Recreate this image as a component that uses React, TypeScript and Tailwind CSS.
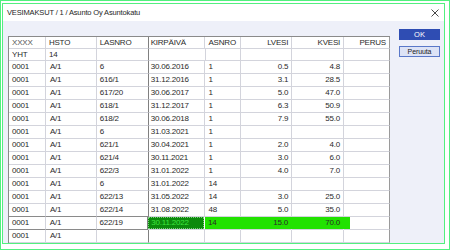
import React from "react";

type Row = {
  a: string;
  b: string;
  c: string;
  d: string;
  e: string;
  f: string;
  g: string;
  current?: boolean;
};

const ROWS: Row[] = [
  { a: "0001", b: "A/1", c: "6", d: "30.06.2016", e: "1", f: "0.5", g: "4.8" },
  { a: "0001", b: "A/1", c: "616/1", d: "31.12.2016", e: "1", f: "3.1", g: "28.5" },
  { a: "0001", b: "A/1", c: "617/20", d: "30.06.2017", e: "1", f: "5.0", g: "47.0" },
  { a: "0001", b: "A/1", c: "618/1", d: "31.12.2017", e: "1", f: "6.3", g: "50.9" },
  { a: "0001", b: "A/1", c: "618/2", d: "30.06.2018", e: "1", f: "7.9", g: "55.0" },
  { a: "0001", b: "A/1", c: "6", d: "31.03.2021", e: "1", f: "", g: "" },
  { a: "0001", b: "A/1", c: "621/1", d: "30.04.2021", e: "1", f: "2.0", g: "4.0" },
  { a: "0001", b: "A/1", c: "621/4", d: "30.11.2021", e: "1", f: "3.0", g: "6.0" },
  { a: "0001", b: "A/1", c: "622/3", d: "31.01.2022", e: "1", f: "4.0", g: "7.0" },
  { a: "0001", b: "A/1", c: "6", d: "31.01.2022", e: "14", f: "", g: "" },
  { a: "0001", b: "A/1", c: "622/13", d: "31.05.2022", e: "14", f: "3.0", g: "25.0" },
  { a: "0001", b: "A/1", c: "622/14", d: "31.08.2022", e: "48", f: "5.0", g: "35.0" },
  { a: "0001", b: "A/1", c: "622/19", d: "30.11.2022", e: "14", f: "15.0", g: "70.0", current: true },
  { a: "0001", b: "A/1", c: "", d: "", e: "", f: "", g: "" },
];

const cell = "h-full flex items-center border-r border-b border-[#d3d4dc] whitespace-nowrap";

const App = () => {
  return (
    <div className="w-[450px] h-[250px] bg-white border border-[#52f07f] pl-[1px] pt-[2px] pr-[4px] pb-[5px] text-[#2a2a2a] font-['Liberation_Sans',Arial,sans-serif]">
      <div className="w-full h-full border border-[#52f07f] flex flex-col">
        {/* Otsikkopalkki */}
        <div className="h-[17px] bg-white flex items-center justify-between pl-[4px] pr-[4px]">
          <span className="text-[7.5px] tracking-[-0.15px] text-[#1e1e1e]">VESIMAKSUT / 1 / Asunto Oy Asuntokatu</span>
          <svg width="8" height="8" viewBox="0 0 8 8" className="mr-[1px]">
            <path d="M0.5 0.5 L7.5 7.5 M7.5 0.5 L0.5 7.5" stroke="#333" strokeWidth="0.9" />
          </svg>
        </div>

        <div className="flex-1 bg-[#eef0f9] flex pl-[5px] pt-[15px]">
          {/* Taulukko */}
          <div className="w-[382px] flex flex-col border-l border-t border-[#8a8a8a] text-[8px] tracking-[-0.2px] leading-none">
            <div className="h-[12px] flex bg-white">
              <div className={`${cell} w-[37px] pl-[3px] text-[#555]`}>XXXX</div>
              <div className={`${cell} w-[51px] pl-[3px]`}>HSTO</div>
              <div className={`${cell} w-[52px] pl-[3px] border-r-[#808080]`}>LASNRO</div>
              <div className={`${cell} w-[57px] pl-[2px]`}>KIRPÄIVÄ</div>
              <div className={`${cell} w-[36px] pl-[3px]`}>ASNRO</div>
              <div className={`${cell} w-[51px] justify-end pr-[3px]`}>LVESI</div>
              <div className={`${cell} w-[52px] justify-end pr-[3px]`}>KVESI</div>
              <div className={`${cell} w-[46px] justify-end pr-[3px] border-r-[#9a9a9a]`}>PERUS</div>
            </div>
            <div className="h-[12px] flex bg-white">
              <div className={`${cell} w-[37px] pl-[3px]`}>YHT</div>
              <div className={`${cell} w-[51px] pl-[3px]`}>14</div>
              <div className={`${cell} w-[52px] pl-[3px] border-r-[#808080]`}></div>
              <div className={`${cell} w-[57px]`}></div>
              <div className={`${cell} w-[36px]`}></div>
              <div className={`${cell} w-[51px]`}></div>
              <div className={`${cell} w-[52px]`}></div>
              <div className={`${cell} w-[46px] border-r-[#9a9a9a]`}></div>
            </div>
            {ROWS.map((r, i) => {
              const nextCurrent = ROWS[i + 1]?.current;
              const dark = r.current || nextCurrent ? "border-b-[#8a8a8a]" : "";
              return (
                <div key={i} className="h-[13px] flex bg-white">
                  <div className={`${cell} ${dark} w-[37px] pl-[3px]`}>{r.a}</div>
                  <div className={`${cell} ${dark} w-[51px] pl-[4px]`}>{r.b}</div>
                  <div className={`${cell} ${dark} w-[52px] pl-[3px] border-r-[#808080]`}>{r.c}</div>
                  {r.current ? (
                    <div className="w-[57px] h-full border-b border-[#d3d4dc] flex">
                      <div className="flex-1 h-full bg-[#0c8a0c] text-[#3ee63e] flex items-center pl-[2px] border border-dotted border-[#7ad07a]">
                        {r.d}
                      </div>
                      <div className="w-[1px] h-full bg-white" />
                    </div>
                  ) : (
                    <div className={`${cell} w-[57px] pl-[2px]`}>{r.d}</div>
                  )}
                  {r.current ? (
                    <div className="relative flex h-full">
                      <div className="absolute left-0 top-0 h-[12px] w-[145px] bg-[#22e200]" />
                      <div className={`${cell} relative w-[36px] pl-[3px] border-r-transparent`}>{r.e}</div>
                      <div className={`${cell} relative w-[51px] justify-end pr-[3px] border-r-transparent`}>{r.f}</div>
                      <div className={`${cell} relative w-[52px] justify-end pr-[3px] border-r-transparent`}>{r.g}</div>
                      <div className={`${cell} relative w-[46px] border-r-[#9a9a9a]`}></div>
                    </div>
                  ) : (
                    <>
                      <div className={`${cell} w-[36px] pl-[3px]`}>{r.e}</div>
                      <div className={`${cell} w-[51px] justify-end pr-[3px]`}>{r.f}</div>
                      <div className={`${cell} w-[52px] justify-end pr-[3px]`}>{r.g}</div>
                      <div className={`${cell} w-[46px] border-r-[#9a9a9a]`}></div>
                    </>
                  )}
                </div>
              );
            })}
          </div>

          {/* Painikkeet */}
          <div className="ml-[9px] flex flex-col gap-[6px] -mt-[7px]">
            <button className="w-[41px] h-[11px] bg-[#2f4db3] text-white text-[7.5px] leading-none flex items-center justify-center">
              OK
            </button>
            <button className="w-[41px] h-[11px] bg-[#dde3f6] border border-[#5a78c8] text-[#222] text-[7px] tracking-[-0.1px] leading-none flex items-center justify-center">
              Peruuta
            </button>
          </div>
        </div>
      </div>
    </div>
  );
};

export default App;
